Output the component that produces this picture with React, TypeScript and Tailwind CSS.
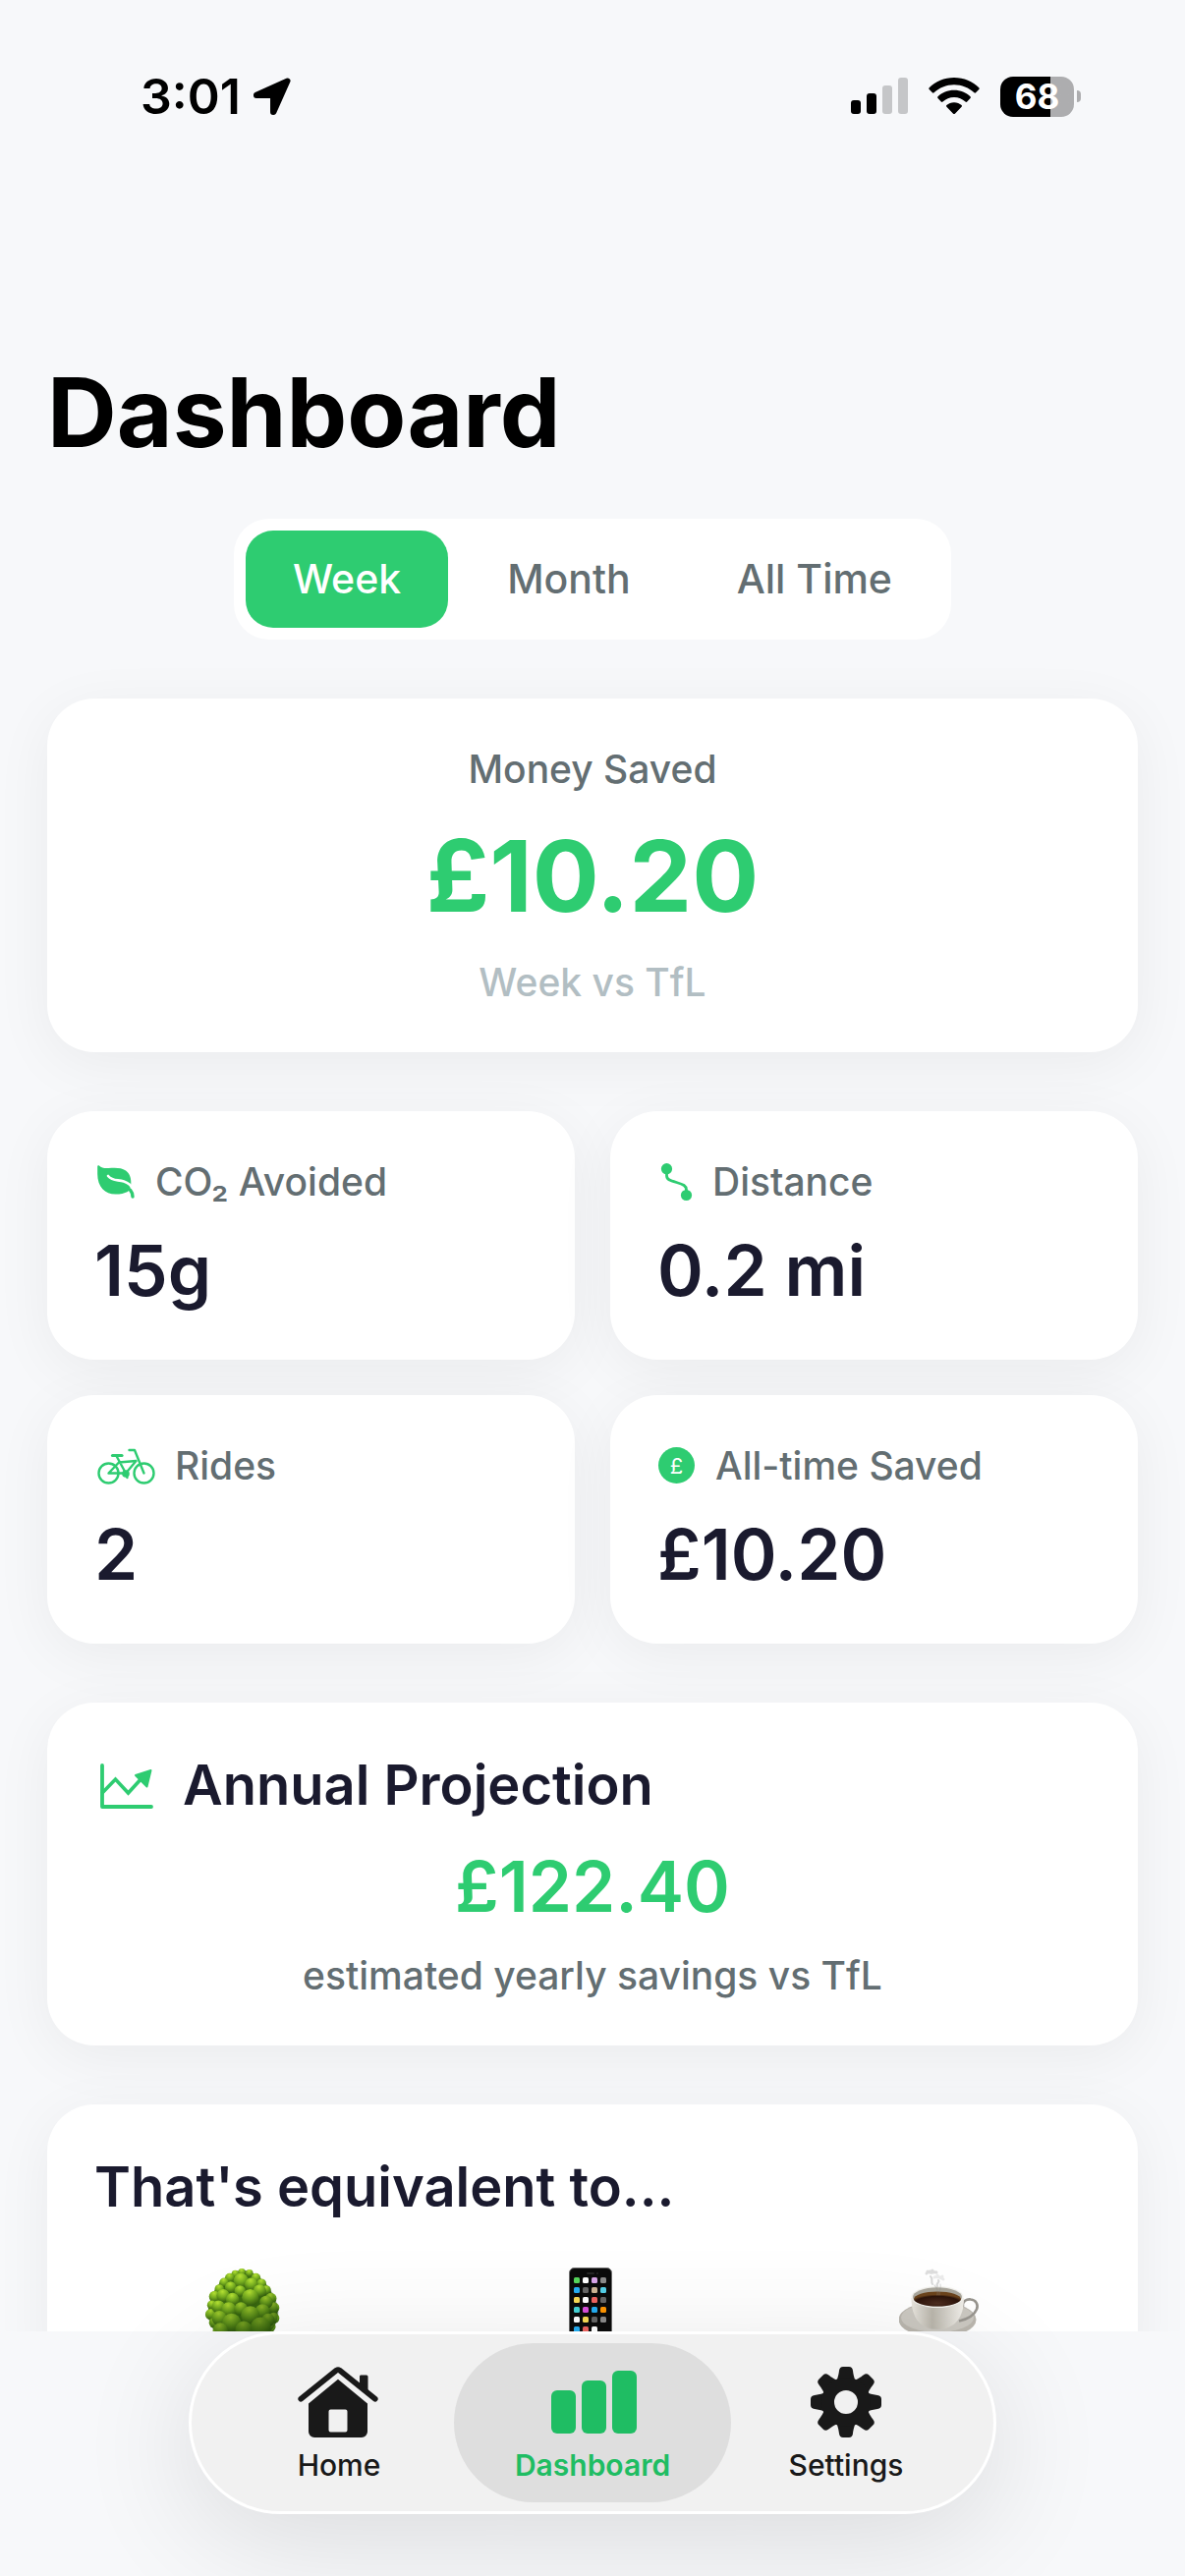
import type { ReactNode } from "react";

const CARD = "rounded-[48px] bg-white p-12 shadow-[0_12px_60px_rgba(0,0,0,0.055)]";
const CAPTION = "text-[39px] leading-[47px] font-medium";
const FIGURE = "text-[71px] leading-[86px] font-semibold";
const HEADING = "text-[56px] leading-[72px] font-semibold";

function LocationArrow() {
  return (
    <svg className="h-[39px] w-[39px]" viewBox="0 0 40 40" aria-hidden="true">
      <path
        d="M36.500 3.500 4 18v.5h17.500V36h.5Z"
        fill="#000"
        stroke="#000"
        strokeWidth="6"
        strokeLinejoin="round"
      />
    </svg>
  );
}

function SignalBars() {
  return (
    <svg className="h-[38px] w-[58px]" viewBox="0 0 58 38" aria-hidden="true">
      <rect x="0" y="23" width="10" height="14" rx="3" />
      <rect x="16" y="16" width="10" height="21" rx="3" />
      <rect x="32" y="8" width="10" height="29" rx="3" fill="#c5c6c8" />
      <rect x="48" y="0" width="10" height="37" rx="3" fill="#c5c6c8" />
    </svg>
  );
}

function Wifi() {
  return (
    <svg className="h-[38px] w-[52px]" viewBox="0 0 52 38" aria-hidden="true">
      <path d="M26 0C36 0 45 4 51.300 10.200c.5.500.5 1.300 0 1.800l-3.200 3.300c-.5.500-1.200.5-1.700 0C41 10.300 34 7.300 26 7.300S11 10.300 5.600 15.300c-.5.500-1.200.5-1.700 0L.7 12c-.5-.5-.5-1.300 0-1.800C7 4 16 0 26 0Z" />
      <path d="M26 12.800c6.600 0 12.300 2.500 16.500 6.500.5.500.5 1.200 0 1.700l-3.300 3.500c-.5.500-1.200.5-1.700 0-3-2.800-7-4.600-11.500-4.600s-8.500 1.800-11.500 4.600c-.5.500-1.200.5-1.700 0L9.500 21c-.5-.5-.5-1.200 0-1.700 4.200-4 9.900-6.500 16.500-6.500Z" />
      <path d="M26 25.300c3 0 5.600 1.100 7.600 2.800.5.500.5 1.200 0 1.700l-6.700 6.900c-.5.500-1.300.5-1.800 0l-6.700-6.900c-.5-.5-.5-1.200 0-1.700 2-1.700 4.600-2.800 7.600-2.800Z" />
    </svg>
  );
}

function Battery() {
  return (
    <div className="flex items-center gap-[3px]">
      <div className="flex h-[41px] w-[75px] items-center justify-center rounded-[13px] bg-linear-to-r from-black from-68% to-[#adadaf] to-68% text-[35px] leading-none font-bold text-white">
        68
      </div>
      <div className="h-3 w-1 rounded-r-full bg-[#adadaf]" />
    </div>
  );
}

function Leaf() {
  return (
    <svg className="h-10 w-[42px]" viewBox="0 0 42 40" aria-hidden="true">
      <path
        d="M3.200 4.600C3.200 3.200 4.400 3 5.200 3.800 7 5.600 10 6.300 14.500 6c7.500-.5 13-.5 17.500 2.500 4 2.800 5.700 8 5.300 13.500-.2 3-1.300 5.700-3.300 8-3.500 1.700-7.500 2.600-12.500 2.600C11 32.600 3.200 25 3.200 12Z"
        fill="#2ecc71"
      />
      <path
        d="M14 14c4.500 5.500 10 3.500 16 5.500 4.500 1.500 7.500 4 9.500 8"
        fill="none"
        stroke="#fff"
        strokeWidth="2.600"
        strokeLinecap="round"
      />
      <path d="M31 26.500c4.500-1 7.800 3 8 8.500" fill="none" stroke="#2ecc71" strokeWidth="3.400" strokeLinecap="round" />
    </svg>
  );
}

function Route() {
  return (
    <svg className="h-10 w-9" viewBox="0 0 36 40" aria-hidden="true">
      <circle cx="9.500" cy="6.700" r="5.600" fill="#2ecc71" />
      <circle cx="29.500" cy="33.500" r="5.600" fill="#2ecc71" />
      <path
        d="M9.500 11v2.500c0 4 3 5 10 7s10 3.500 10 7.500v2"
        fill="none"
        stroke="#2ecc71"
        strokeWidth="2.800"
      />
    </svg>
  );
}

function Bicycle() {
  return (
    <svg
      className="h-10 w-[62px]"
      viewBox="0 0 62 40"
      fill="none"
      stroke="#2ecc71"
      strokeWidth="2.400"
      strokeLinecap="round"
      strokeLinejoin="round"
      aria-hidden="true"
    >
      <circle cx="14.500" cy="27.500" r="10" />
      <circle cx="50.500" cy="27.500" r="10" />
      <path d="M18.500 9.500H28" strokeWidth="3.200" />
      <path d="M22.500 10 32 27.500H14.500L25 16.500 42.500 15 32 27.500" />
      <path d="M35.500 4H41l9.500 23.500" />
      <circle cx="32" cy="28" r="2.600" fill="#2ecc71" />
      <path d="m32 28 1.500 4" />
    </svg>
  );
}

function PoundBadge() {
  return (
    <span
      aria-hidden="true"
      className="mx-px flex h-[37px] w-[37px] items-center justify-center rounded-full bg-[#2ecc71] text-[22px] leading-none font-normal text-white"
    >
      £
    </span>
  );
}

function ChartIcon() {
  return (
    <svg className="h-14 w-[62px]" viewBox="0 0 62 56" aria-hidden="true">
      <g fill="none" stroke="#2ecc71" strokeLinecap="round" strokeLinejoin="round">
        <path d="M8 8V50H58" strokeWidth="3.800" />
        <path d="M8.500 35.500 21.500 22 34.500 36 50 19" strokeWidth="3.600" strokeLinejoin="miter" />
      </g>
      <path d="M57.500 13 42 18 53.500 29.500Z" fill="#2ecc71" stroke="#2ecc71" strokeWidth="2" strokeLinejoin="round" />
    </svg>
  );
}

/* Foliage clumps, back to front: x, y, radius. */
const CLUMPS: [number, number, number][] = [
  [41, 5, 4], [34, 7, 4], [49, 6, 4], [28, 11, 5], [56, 11, 5], [22, 16, 5], [62, 17, 5], [17, 23, 5],
  [67, 24, 5], [12, 31, 6], [72, 33, 6], [9, 40, 5], [75, 43, 6], [8, 50, 6], [75, 54, 6], [12, 59, 6],
  [71, 63, 6], [40, 14, 8], [51, 18, 7], [29, 21, 6], [60, 25, 7], [21, 30, 7], [39, 25, 6], [67, 37, 7],
  [31, 34, 7], [50, 32, 9], [16, 42, 7], [63, 47, 8], [27, 45, 8], [40, 44, 7], [69, 56, 7], [17, 54, 8],
  [50, 51, 10], [30, 59, 10], [43, 66, 9], [61, 64, 11], [18, 67, 8],
];

function Tree() {
  return (
    <svg className="h-[84px] w-[84px]" viewBox="0 0 88 88" role="img" aria-label="Tree">
      <defs>
        <radialGradient id="clump" cx="0.45" cy="0.2" r="0.8">
          <stop offset="0" stopColor="#b6e233" />
          <stop offset="0.5" stopColor="#76ad20" />
          <stop offset="1" stopColor="#35620f" />
        </radialGradient>
        <linearGradient id="shade" x1="0.3" y1="0" x2="0.7" y2="1">
          <stop offset="0.35" stopColor="#1d4208" stopOpacity="0" />
          <stop offset="1" stopColor="#1d4208" stopOpacity="0.7" />
        </linearGradient>
      </defs>
      <rect x="37" y="68" width="11" height="18" fill="#6b4a2b" />
      <path d="M42 3C22 5 6 26 5 48c2 16 12 26 37 26s35-10 37-26C77 26 62 5 42 3Z" fill="#3f7212" />
      {CLUMPS.map(([x, y, r]) => (
        <circle key={`${x}-${y}`} cx={x} cy={y} r={r} fill="url(#clump)" />
      ))}
      <path d="M42 2C21 4 5 26 4 48c2 19 12 28 38 28s36-9 38-28C78 26 63 4 42 2Z" fill="url(#shade)" />
    </svg>
  );
}

const APPS = [
  "#56d65c", "#ffffff", "#d9a5e8", "#8b8b8b",
  "#25aef3", "#666666", "#cdb595", "#55d0e8",
  "#f9dc55", "#ffffff", "#ef6460", "#666666",
  "#45d2d6", "#d94fdc", "#25aef3", "#ff9500",
  "#ffffff", "#f9dc55", "#666666", "#8b8b8b",
  "#25aef3", "#ef6460", "#ffffff",
];

function Phone() {
  return (
    <svg className="h-[84px] w-[84px]" viewBox="0 0 84 84" role="img" aria-label="Phone">
      <rect x="18.500" y="0.500" width="43" height="83" rx="5" fill="#0b0b0b" stroke="#6d6d6d" />
      <rect x="36" y="5" width="8" height="2" rx="1" fill="#262626" />
      <rect x="46" y="5" width="2" height="2" rx="1" fill="#262626" />
      {APPS.map((color, i) => (
        <rect key={i} x={23 + (i % 4) * 9} y={10 + Math.floor(i / 4) * 10} width="6" height="6" rx="1.500" fill={color} />
      ))}
    </svg>
  );
}

function Coffee() {
  return (
    <svg className="h-[84px] w-[84px]" viewBox="0 0 84 84" role="img" aria-label="Coffee">
      <defs>
        <linearGradient id="cup" x1="0" y1="0" x2="1" y2="0">
          <stop offset="0" stopColor="#e9e6df" />
          <stop offset="0.4" stopColor="#b9b5ab" />
          <stop offset="1" stopColor="#f1efea" />
        </linearGradient>
        <radialGradient id="brew" cx="0.5" cy="0.8" r="0.6">
          <stop offset="0" stopColor="#4d2d20" />
          <stop offset="0.8" stopColor="#2c140a" />
          <stop offset="1" stopColor="#6b431c" />
        </radialGradient>
      </defs>
      <ellipse cx="39" cy="53" rx="39.500" ry="18" fill="#bab6ae" />
      <ellipse cx="39" cy="51" rx="37" ry="15" fill="#cbc8c1" />
      <path d="M65 40c-1-6 4-8 8-7.500 5 .5 8 5 6 10-2.500 6-9 10-18 12" fill="none" stroke="#98958f" strokeWidth="2.600" />
      <path d="M12.500 31c0 20 9 32 26.500 32s27-12 27-32Z" fill="url(#cup)" />
      <ellipse cx="39" cy="30" rx="26.500" ry="11" fill="#f3f2ee" />
      <ellipse cx="39" cy="30" rx="25" ry="9.700" fill="#a9a69c" />
      <ellipse cx="39" cy="32" rx="24" ry="7.500" fill="url(#brew)" />
      <g fill="none" stroke="#8e8e8e" strokeLinecap="round">
        <path d="M39 28c1-5-1-8-3-10M41 28c0-5 2-7 1-11" strokeWidth="1.200" opacity="0.3" />
        <path d="M34 17c-2-3 1-5-2-8M40 13c2 2-3 3-1 6" strokeWidth="2" opacity="0.35" />
        <path d="M28 6c2-3 4-1 6-3M29 4c3 3 6 0 9 1" strokeWidth="3" opacity="0.3" />
        <path d="M36 10c3-2 5 2 8-1M39 8c2 3 4 2 6 4" strokeWidth="3" opacity="0.18" />
      </g>
    </svg>
  );
}

function HouseIcon() {
  return (
    <svg className="h-[72px] w-[84px]" viewBox="0 0 84 72" aria-hidden="true">
      <path d="M64 8.500h6a1.500 1.500 0 0 1 1.500 1.500v18L63 21V10a1.500 1.500 0 0 1 1-1.500Z" fill="#191919" />
      <path
        d="M3.200 32.800 39.500 3.500q1.500-1 3 0L78.800 32.800"
        fill="none"
        stroke="#191919"
        strokeWidth="5.600"
        strokeLinecap="round"
        strokeLinejoin="round"
      />
      <path
        fillRule="evenodd"
        d="M41 12.700 71 37.500V66a6 6 0 0 1-6 6H17a6 6 0 0 1-6-6V37.500ZM33.500 43.500a2 2 0 0 0-2 2v19a2 2 0 0 0 2 2h15a2 2 0 0 0 2-2v-19a2 2 0 0 0-2-2Z"
        fill="#191919"
      />
    </svg>
  );
}

function BarsIcon() {
  return (
    <svg className="h-[72px] w-[90px]" viewBox="-3 0 90 72" fill="#1fbd63" aria-hidden="true">
      <rect x="0" y="24" width="25" height="44" rx="6" />
      <rect x="31" y="14" width="25" height="54" rx="6" />
      <rect x="62" y="4" width="25" height="64" rx="6" />
    </svg>
  );
}

function GearIcon() {
  return (
    <svg className="h-[72px] w-[72px]" viewBox="-36 -36 72 72" aria-hidden="true">
      {[0, 45, 90, 135, 180, 225, 270, 315].map((angle) => (
        <path
          key={angle}
          transform={`rotate(${angle})`}
          d="M-10-20C-8-26-7.500-28-7-32q.5-4 4-4h6q3.500 0 4 4c.5 4 1 6 3 12Z"
          fill="#191919"
        />
      ))}
      <circle r="18.500" fill="none" stroke="#191919" strokeWidth="13" />
    </svg>
  );
}

function Stat({ icon, label, value }: { icon: ReactNode; label: string; value: string }) {
  return (
    <article className={`${CARD} flex flex-col gap-6`}>
      <h2 className={`${CAPTION} flex items-center gap-5 text-[#636e72]`}>
        {icon}
        {label}
      </h2>
      <p className={FIGURE}>{value}</p>
    </article>
  );
}

function Tab({ icon, label, active = false }: { icon: ReactNode; label: string; active?: boolean }) {
  return (
    <button
      type="button"
      aria-current={active ? "page" : undefined}
      className={`flex w-[282px] flex-col items-center gap-[10px] rounded-full pt-6 pb-5 text-[30px] leading-9 ${
        active ? "bg-[#dedede] font-semibold text-[#1fbd63]" : "font-medium text-[#191919]"
      }`}
    >
      {icon}
      {label}
    </button>
  );
}

export default function App() {
  return (
    <div className="flex h-screen flex-col overflow-hidden bg-[#f7f8fa] font-['Inter',sans-serif] text-[#1a1a2e]">
      <main className="min-h-0 flex-1 overflow-hidden">
        <header className="flex h-[196px] items-center justify-between pr-[106px] pl-[143px] text-black">
          <div className="flex items-center gap-3">
            <time className="text-[50px] leading-none font-semibold">3:01</time>
            <LocationArrow />
          </div>
          <div className="flex items-center gap-[21px]">
            <SignalBars />
            <Wifi />
            <Battery />
          </div>
        </header>

        <div className="flex flex-col gap-[60px] px-12 pt-[164px]">
          <div className="flex flex-col gap-12">
            <h1 className="text-[98px] leading-[120px] font-bold text-black">Dashboard</h1>
            <div
              role="group"
              aria-label="Period"
              className="flex gap-3 self-center rounded-[36px] bg-white p-3 text-[41px] leading-[51px] font-medium text-[#636e72]"
            >
              <button type="button" aria-pressed="true" className="rounded-[28px] bg-[#2ecc71] px-12 py-6 text-white">
                Week
              </button>
              <button type="button" aria-pressed="false" className="rounded-[28px] px-12 py-6">
                Month
              </button>
              <button type="button" aria-pressed="false" className="rounded-[28px] px-12 py-6">
                All Time
              </button>
            </div>
          </div>

          <section className={`${CARD} flex flex-col items-center gap-6`}>
            <h2 className={`${CAPTION} text-[#636e72]`}>Money Saved</h2>
            <p className="text-[101px] leading-[122px] font-bold text-[#2ecc71]">£10.20</p>
            <p className={`${CAPTION} text-[#b2bec3]`}>Week vs TfL</p>
          </section>

          <section className="grid grid-cols-2 gap-9">
            <Stat icon={<Leaf />} label="CO₂ Avoided" value="15g" />
            <Stat icon={<Route />} label="Distance" value="0.2 mi" />
            <Stat icon={<Bicycle />} label="Rides" value="2" />
            <Stat icon={<PoundBadge />} label="All-time Saved" value="£10.20" />
          </section>

          <section className={`${CARD} flex flex-col gap-6`}>
            <h2 className={`${HEADING} flex items-center gap-7`}>
              <ChartIcon />
              Annual Projection
            </h2>
            <p className={`${FIGURE} text-center text-[#2ecc71]`}>£122.40</p>
            <p className={`${CAPTION} text-center text-[#636e72]`}>estimated yearly savings vs TfL</p>
          </section>

          <section className={`${CARD} flex flex-col gap-[46px]`}>
            <h2 className={HEADING}>That's equivalent to...</h2>
            <div className="grid grid-cols-3 justify-items-center gap-12">
              <Tree />
              <Phone />
              <Coffee />
            </div>
          </section>
        </div>
      </main>

      <nav aria-label="Main" className="relative flex shrink-0 justify-center pb-[63px]">
        <div className="flex -space-x-6 rounded-full border-3 border-white bg-[#f1f1f1] p-[9px] shadow-[0_24px_120px_rgba(0,0,0,0.12)]">
          <Tab icon={<HouseIcon />} label="Home" />
          <Tab icon={<BarsIcon />} label="Dashboard" active />
          <Tab icon={<GearIcon />} label="Settings" />
        </div>
      </nav>
    </div>
  );
}
